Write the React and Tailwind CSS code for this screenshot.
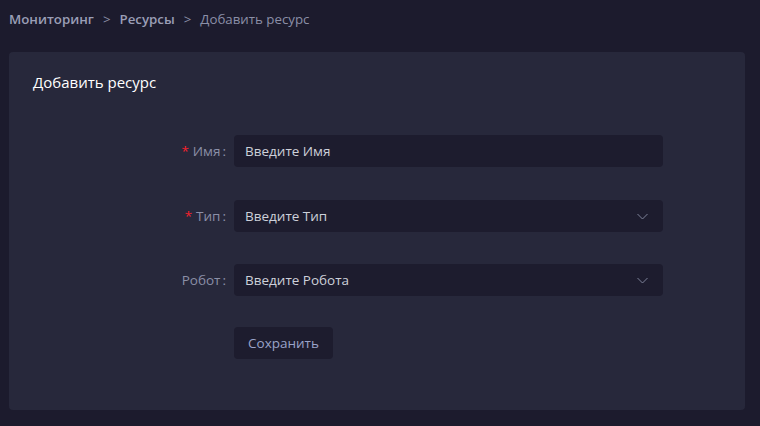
import React from "react";

const Chevron = () => (
  <svg width="11" height="7" viewBox="0 0 11 7" fill="none" className="mr-[4px] text-[#7f8299]">
    <path d="M0.5 1 5.5 6 10.5 1" stroke="currentColor" strokeWidth="1" />
  </svg>
);

function Field({ label, required, placeholder, select }) {
  return (
    <div className="flex items-center">
      <div className="flex w-[193px] shrink-0 justify-end text-[13.5px] text-[#8b8fa7]">
        {required ? <span className="mr-[4px] text-[#f5222d]">*</span> : null}
        <span>{label}</span>
        <span className="ml-[2px]">:</span>
      </div>
      <div className="ml-[8px] flex h-[32px] w-[429px] items-center justify-between rounded-[4px] bg-[#1d1c2e] px-[11px] text-[13.5px] text-[#cdd0da]">
        <span>{placeholder}</span>
        {select ? <Chevron /> : null}
      </div>
    </div>
  );
}

export default function App() {
  return (
    <div
      className="h-[426px] w-[760px] overflow-hidden bg-[#1c1b2d] pl-[9px] pr-[15px]"
      style={{ fontFamily: '"Open Sans", "Noto Sans", sans-serif' }}
    >
      <div className="flex h-[40px] items-center gap-[9px] text-[13.3px] text-[#8b8fa7]">
        <span className="font-semibold text-[#9a9eb6]">Мониторинг</span>
        <span>&gt;</span>
        <span className="font-semibold text-[#9a9eb6]">Ресурсы</span>
        <span>&gt;</span>
        <span>Добавить ресурс</span>
      </div>
      <div className="mt-[12px] h-[358px] rounded-[4px] bg-[#27283b] px-[24px] pt-[19px]">
        <h1 className="text-[15px] leading-[22px] text-white">Добавить ресурс</h1>
        <div className="mt-[42px] flex flex-col">
          <Field label="Имя" required placeholder="Введите Имя" />
          <div className="mt-[33px]">
            <Field label="Тип" required placeholder="Введите Тип" select />
          </div>
          <div className="mt-[32px]">
            <Field label="Робот" placeholder="Введите Робота" select />
          </div>
          <div className="mt-[31px] pl-[201px]">
            <button className="h-[32px] w-[99px] rounded-[4px] bg-[#1d1c2e] text-[13.5px] text-[#9aa3c8]">
              Сохранить
            </button>
          </div>
        </div>
      </div>
    </div>
  );
}
